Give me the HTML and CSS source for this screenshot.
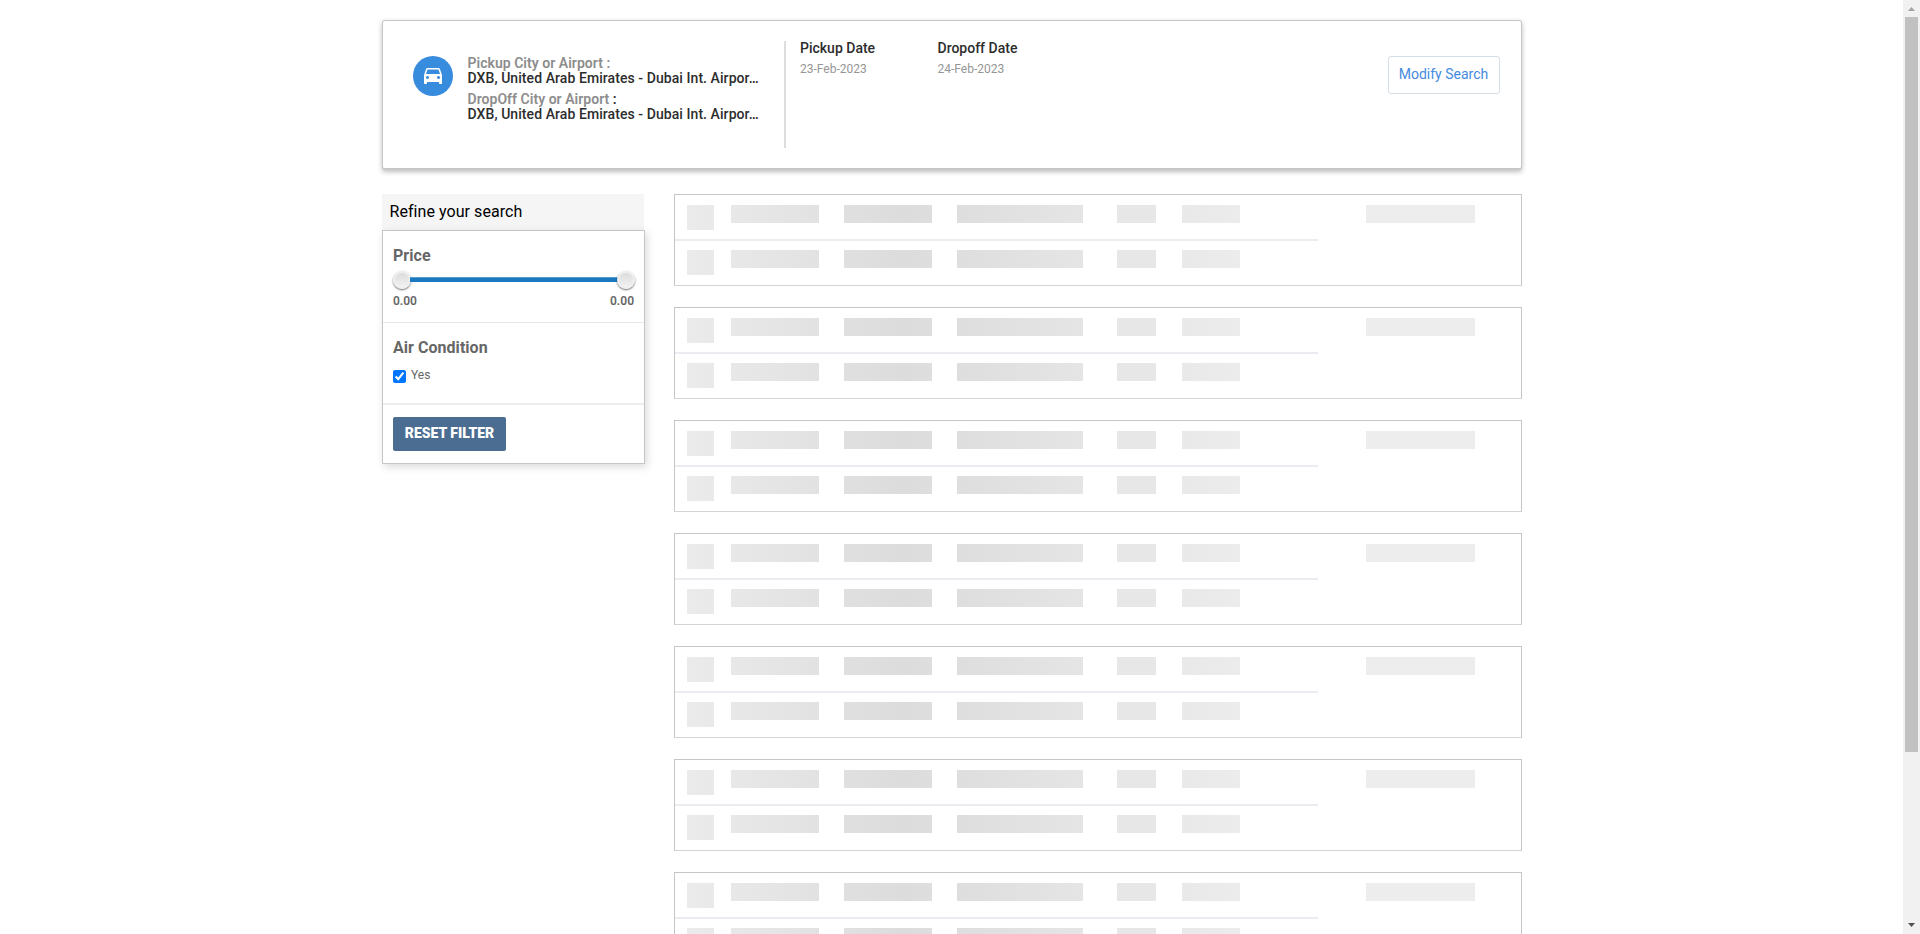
FILE: index.html
```
<!DOCTYPE html>
<html lang="en">
<head>
<meta charset="utf-8">
<title>Car Search</title>
<link rel="stylesheet" href="styles.css">
</head>
<body>
<div class="page">
  <main class="container">
    <header class="summary">
      <div class="route">
        <div class="car-badge">
          <svg width="24" height="24" viewBox="0 0 24 24" fill="#fff"><path d="M18.920 5.010C18.720 4.420 18.160 4 17.500 4h-11c-.66 0-1.210.42-1.420 1.010L3 11v8c0 .55.45 1 1 1h1c.55 0 1-.45 1-1v-1h12v1c0 .55.45 1 1 1h1c.55 0 1-.45 1-1v-8l-2.080-5.990zM6.500 15c-.83 0-1.500-.67-1.500-1.500S5.670 12 6.500 12s1.500.67 1.500 1.500S7.330 15 6.500 15zm11 0c-.83 0-1.500-.67-1.500-1.500s.67-1.500 1.500-1.500 1.500.67 1.500 1.500-.67 1.500-1.500 1.500zM5 10l1.500-4.500h11L19 10H5z"/></svg>
        </div>
        <div class="places">
          <div class="place"><span class="muted">Pickup City or Airport :</span><p class="name">DXB, United Arab Emirates - Dubai Int. Airpor…</p></div>
          <div class="place"><span class="muted">DropOff City or Airport</span> :<p class="name">DXB, United Arab Emirates - Dubai Int. Airpor…</p></div>
        </div>
      </div>
      <div class="dates">
        <div class="date"><b>Pickup Date</b><span>23-Feb-2023</span></div>
        <div class="date"><b>Dropoff Date</b><span>24-Feb-2023</span></div>
      </div>
      <button class="modify">Modify Search</button>
    </header>
    <div class="columns">
      <aside class="sidebar">
        <h2 class="side-title">Refine your search</h2>
        <div class="filters">
          <section class="filter price">
            <h3>Price</h3>
            <div class="slider"><i class="knob"></i><i class="track"></i><i class="knob"></i></div>
            <div class="range"><span>0.00</span><span>0.00</span></div>
          </section>
          <section class="filter air">
            <h3>Air Condition</h3>
            <label class="check"><input type="checkbox" checked><span>Yes</span></label>
          </section>
          <section class="filter reset"><button class="reset-btn">RESET FILTER</button></section>
        </div>
      </aside>
      <div class="results" id="results"></div>
    </div>
  </main>
  <div class="scrollbar">
    <svg width="17" height="17"><path d="M5 11h7L8.500 7z" fill="#a3a3a3"/></svg>
    <div class="thumb"></div>
    <svg class="down" width="17" height="17"><path d="M5 6h7L8.500 10z" fill="#505050"/></svg>
  </div>
</div>
<script src="app.js"></script>
</body>
</html>
```
FILE: app.js
```
const line = '<div class="line"><i class="sq"></i><i class="bar a"></i><i class="bar b"></i><i class="bar c"></i><i class="bar d"></i><i class="bar e"></i></div>';
const card = '<article class="card"><div class="lines">' + line + line + '</div><i class="bar f"></i></article>';
document.getElementById('results').innerHTML = card.repeat(7);
```
FILE: styles.css
```
* { box-sizing: border-box; }
body { margin: 0; font-family: Roboto, sans-serif; overflow: hidden; background: #fff; }
h2, h3, p { margin: 0; }
.page { display: flex; height: 934px; overflow: hidden; }
.container { width: 1140px; margin: 20px auto 0; }
.summary { display: flex; height: 150px; border: 1px solid #c6c6c6; border-bottom-width: 2px; border-radius: 3px; box-shadow: 0 2px 5px rgba(0,0,0,.26); padding: 20px 21px 0 30px; }
.route { display: flex; width: 373px; height: 107px; border-right: 2px solid #ddd; padding-top: 15px; gap: 15px; }
.car-badge { width: 40px; height: 40px; border-radius: 50%; background: #388cdd; display: flex; align-items: center; justify-content: center; flex: none; }
.places { width: 296px; font-size: 14px; line-height: 15px; font-weight: 600; color: #2d2d2d; }
.place { height: 36px; }
.muted { color: #8d8d8d; letter-spacing: .03px; }
.name { white-space: nowrap; font-weight: 500; letter-spacing: .07px; }
.dates { display: flex; padding-left: 14.500px; flex: 1; }
.date { width: 137.500px; display: flex; flex-direction: column; font-size: 12px; line-height: 18px; color: #969696; }
.date b { font-size: 14px; font-weight: 500; line-height: 16px; color: #2d2d2d; margin: -1px 0 4px; }
.modify { width: 112px; height: 38px; margin-top: 15px; padding: 0 0 2px; border: 1px solid #d5dde5; border-radius: 3px; background: #fff; color: #468be0; font: 14px Roboto, sans-serif; }
.columns { display: flex; justify-content: space-between; margin-top: 24px; }
.sidebar { width: 263px; }
.side-title { width: 262px; height: 36px; padding-left: 8px; background: #f5f5f5; font-size: 16px; line-height: 36px; font-weight: 400; letter-spacing: .06px; color: #000; }
.filters { height: 234px; border: 1px solid #c6c6c6; box-shadow: 2px 3px 8px rgba(0,0,0,.15); }
.filter { padding: 0 8.500px 0 10.500px; border-bottom: 1px solid #e8e8e8; color: #666; }
.filter h3 { font-size: 16px; line-height: 20px; font-weight: 700; letter-spacing: .04px; }
.price { height: 92px; padding-top: 15px; }
.air { height: 82px; padding-top: 15px; border-bottom: 2px solid #ededed; }
.slider { display: flex; align-items: center; height: 18px; margin-top: 5px; }
.knob { width: 18px; height: 18px; border-radius: 50%; border: 2px solid #eee; background: linear-gradient(#dcdcdc, #f2f2f2); box-shadow: 0 1px 2px rgba(0,0,0,.6); }
.track { flex: 1; height: 5px; background: #1b7abf; border-top: 1px solid #559fce; margin: -2px -1px 0; }
.range { display: flex; justify-content: space-between; font-size: 12px; line-height: 16px; font-weight: 600; margin: 4px 1px 0 0; }
.check { display: flex; font-size: 12px; line-height: 16px; gap: 5px; margin-top: 9px; }
.check input { width: 13px; height: 13px; margin: 3px 0 0; accent-color: #0075ff; }
.reset { border: 0; padding-top: 12px; }
.reset-btn { display: block; width: 113px; height: 34px; border: 0; border-radius: 2px; background: #4b6d92; color: #fff; font: 900 14px Roboto, sans-serif; padding: 0 0 2px; }
.results { width: 848px; display: flex; flex-direction: column; gap: 21px; }
.card { display: flex; height: 92px; border: 1px solid #c6c6c6; border-bottom-color: #d4d4d4; }
.lines { width: 643px; margin-right: 48px; }
.line { display: flex; height: 44px; padding: 9px 0 0 12px; }
.line:first-child { height: 46px; padding-top: 10px; border-bottom: 2px solid #ebebf1; }
.sq { width: 27px; height: 25px; background: linear-gradient(90deg, #ebebeb, #e9e9e9); margin-right: 17px; }
.bar { height: 18px; }
.a { width: 88px; background: linear-gradient(90deg, #e8e8e8, #e2e2e2); margin-right: 25px; }
.b { width: 88px; background: linear-gradient(90deg, #e0e0e0, #dcdcdc 70%, #dedede); margin-right: 25px; }
.c { width: 126px; background: linear-gradient(90deg, #dedede, #e5e5e5); margin-right: 34px; }
.d { width: 39px; background: #e7e7e7; margin-right: 26px; }
.e { width: 58px; background: linear-gradient(90deg, #e9e9e9, #ececec); }
.f { width: 109px; background: #ededed; margin-top: 10px; }
.scrollbar { width: 17px; height: 934px; background: #f1f1f1; display: flex; flex-direction: column; }
.scrollbar svg { flex: none; }
.thumb { width: 13px; height: 735px; margin-left: 2px; background: #c1c1c1; }
.down { margin-top: auto; }
```
